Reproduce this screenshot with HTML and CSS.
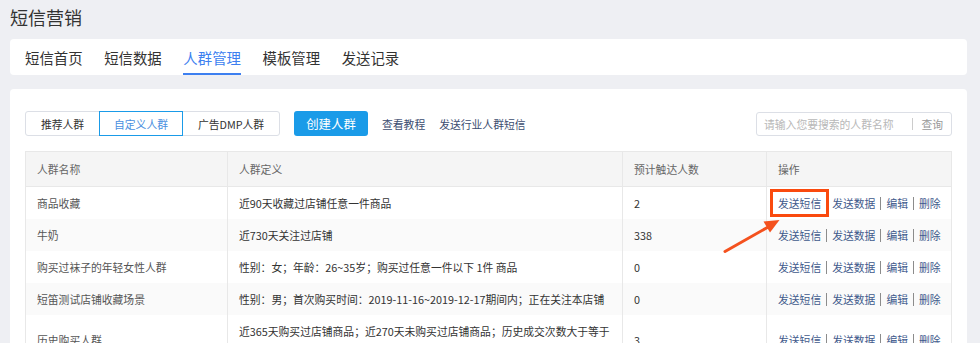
FILE: index.html
```html
<!DOCTYPE html>
<html lang="zh-CN">
<head>
<meta charset="utf-8">
<title>短信营销</title>
<link rel="stylesheet" href="styles.css">
</head>
<body>
<div class="page">
  <h1 class="title">短信营销</h1>
  <nav class="tabs">
    <a class="tab">短信首页</a>
    <a class="tab">短信数据</a>
    <a class="tab active">人群管理</a>
    <a class="tab">模板管理</a>
    <a class="tab">发送记录</a>
  </nav>
  <section class="card">
    <div class="toolbar">
      <div class="segment">
        <span class="seg">推荐人群</span>
        <span class="seg on">自定义人群</span>
        <span class="seg">广告DMP人群</span>
      </div>
      <button class="create">创建人群</button>
      <a class="tlink">查看教程</a>
      <a class="tlink">发送行业人群短信</a>
      <div class="search">
        <span class="ph">请输入您要搜索的人群名称</span>
        <span class="qbtn">查询</span>
      </div>
    </div>
    <table class="grid">
      <colgroup>
        <col class="c1"><col class="c2"><col class="c3"><col class="c4">
      </colgroup>
      <thead>
        <tr><th>人群名称</th><th>人群定义</th><th>预计触达人数</th><th>操作</th></tr>
      </thead>
      <tbody>
        <tr><td class="name">商品收藏</td><td>近90天收藏过店铺任意一件商品</td><td>2</td>
          <td class="ops"><a class="op">发送短信</a><a class="op">发送数据</a><a class="op">编辑</a><a class="op">删除</a></td></tr>
        <tr><td class="name">牛奶</td><td>近730天关注过店铺</td><td>338</td>
          <td class="ops"><a class="op">发送短信</a><a class="op">发送数据</a><a class="op">编辑</a><a class="op">删除</a></td></tr>
        <tr><td class="name">购买过袜子的年轻女性人群</td><td>性别：女；年龄：26~35岁；购买过任意一件以下 1件 商品</td><td>0</td>
          <td class="ops"><a class="op">发送短信</a><a class="op">发送数据</a><a class="op">编辑</a><a class="op">删除</a></td></tr>
        <tr><td class="name">短笛测试店铺收藏场景</td><td>性别：男；首次购买时间：2019-11-16~2019-12-17期间内；正在关注本店铺</td><td>0</td>
          <td class="ops"><a class="op">发送短信</a><a class="op">发送数据</a><a class="op">编辑</a><a class="op">删除</a></td></tr>
        <tr class="tall"><td class="name">历史购买人群</td><td>近365天购买过店铺商品；近270天未购买过店铺商品；历史成交次数大于等于 1次</td><td>3</td>
          <td class="ops"><a class="op">发送短信</a><a class="op">发送数据</a><a class="op">编辑</a><a class="op">删除</a></td></tr>
      </tbody>
    </table>
  </section>
  <div class="mark"></div>
  <svg class="arrow" width="70" height="45" viewBox="715 215 70 45">
    <line x1="725" y1="251.5" x2="770" y2="226" stroke="#f4511e" stroke-width="3" stroke-linecap="round"/>
    <polygon points="779.5,220 770,232.5 763.5,221.5" fill="#f4511e"/>
  </svg>
</div>
</body>
</html>
```
FILE: styles.css
```css
* { box-sizing: border-box; }
html, body { margin: 0; padding: 0; }
body {
  background: #eeeff3;
  font-family: "Noto Sans CJK SC", "Noto Sans", sans-serif;
  color: #333;
  height: 343px;
  overflow: hidden;
}
.page {
  position: relative;
  padding: 0 13px 0 10px;
}
.title {
  margin: 0;
  font-size: 18px;
  font-weight: 400;
  line-height: 24px;
  padding-top: 5px;
  height: 39px;
  color: #333;
}
.tabs {
  display: flex;
  gap: 21.6px;
  height: 36px;
  background: #fff;
  border-radius: 4px;
  padding-left: 15px;
}
.tab {
  display: flex;
  align-items: center;
  font-size: 14.4px;
  color: #333;
  border-bottom: 2px solid transparent;
  padding-top: 2px;
}
.tab.active {
  color: #3d7ff0;
  border-bottom-color: #3d7ff0;
}
.card {
  margin-top: 14px;
  background: #fff;
  border-radius: 4px;
  padding: 22px 15px 0 15px;
  height: 300px;
}
.toolbar {
  display: flex;
  align-items: center;
  height: 25px;
}
.segment {
  display: flex;
  height: 25px;
  border: 1px solid #dcdfe6;
  border-radius: 3px;
}
.seg {
  display: flex;
  align-items: center;
  justify-content: center;
  font-size: 10.8px;
  color: #333;
  border: 1px solid transparent;
  margin: -1px 0;
}
.seg:nth-child(1) { width: 73px; }
.seg:nth-child(2) { width: 84px; }
.seg:nth-child(3) { width: 96px; }
.seg.on {
  border-color: #1a9be8;
  color: #4a8fe0;
}
.create {
  margin-left: 14px;
  width: 74px;
  height: 25px;
  border: 0;
  border-radius: 3px;
  background: #1a9be8;
  color: #fff;
  font-family: inherit;
  font-size: 12.4px;
  padding: 0;
}
.tlink {
  margin-left: 14px;
  font-size: 10.8px;
  color: #3c4d70;
}
.search {
  margin-left: auto;
  width: 196px;
  height: 24px;
  border: 1px solid #dcdfe6;
  border-radius: 3px;
  display: flex;
  align-items: center;
  padding-left: 7px;
  font-size: 10.8px;
}
.ph { color: #b8b8b8; flex: 1; }
.qbtn {
  color: #999;
  border-left: 1px solid #ccc;
  line-height: 12px;
  padding: 0 8px 0 8px;
}
.grid {
  margin-top: 15px;
  width: 100%;
  border-collapse: collapse;
  table-layout: fixed;
  font-size: 10.8px;
  border: 1px solid #e8e8e8;
}
.c1 { width: 202px; }
.c2 { width: 395px; }
.c3 { width: 144px; }
.grid th {
  background: #f5f5f5;
  height: 35px;
  text-align: left;
  font-weight: 400;
  color: #666;
  padding: 0 11px;
  border-left: 1px solid #e8e8e8;
  border-bottom: 1px solid #e8e8e8;
}
.grid td {
  height: 32px;
  padding: 0 11px;
  border-left: 1px solid #e8e8e8;
  color: #333;
  line-height: 18px;
}
.grid td.name { color: #555; }
.grid tbody tr:nth-child(even) td { background: #fafafa; }
.grid tr.tall td { height: 48px; padding-top: 3px; }
.ops { white-space: nowrap; }
.op {
  display: inline-block;
  color: #3f5a8c;
  padding: 0 5px;
  line-height: 13px;
  border-left: 1px solid #8c8c8c;
}
.op:first-child { border-left: 0; padding-left: 0; }
.mark {
  position: absolute;
  left: 770px;
  top: 189px;
  width: 59px;
  height: 28px;
  border: 3px solid #fa4a0e;
}
.arrow {
  position: absolute;
  left: 715px;
  top: 215px;
}
```
